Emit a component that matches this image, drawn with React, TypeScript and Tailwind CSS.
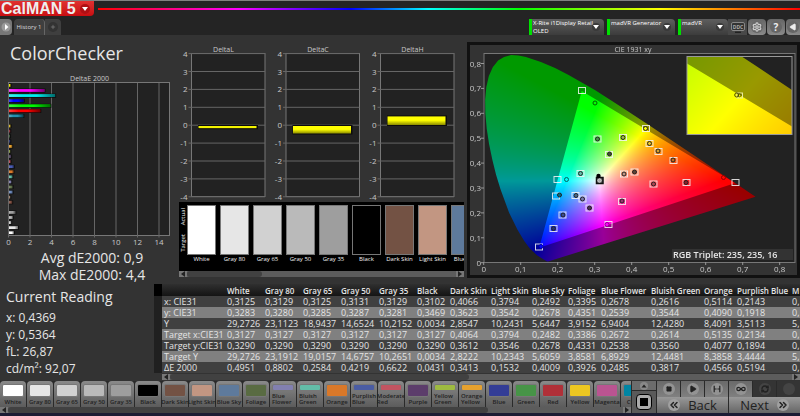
import { useEffect, useRef } from 'react';
import {
    ChevronsLeft, ChevronsRight, Infinity as InfinityIcon,
    Play, Plus, RefreshCw, Settings, Square,
} from 'lucide-react';

type Point = [number, number];

type Patch = {
    name: string;
    color: string;
    twoLines?: boolean;
};

const patches: Patch[] = [
    { name: 'White', color: '#ffffff' },
    { name: 'Gray 80', color: '#e6e6e6' },
    { name: 'Gray 65', color: '#d1d1d1' },
    { name: 'Gray 50', color: '#bababa' },
    { name: 'Gray 35', color: '#9e9e9e' },
    { name: 'Black', color: '#000000' },
    { name: 'Dark Skin', color: '#735244' },
    { name: 'Light Skin', color: '#c29682' },
    { name: 'Blue Sky', color: '#5e7a9c' },
    { name: 'Foliage', color: '#596b42' },
    { name: 'Blue Flower', color: '#8280b0', twoLines: true },
    { name: 'Bluish Green', color: '#63bda8', twoLines: true },
    { name: 'Orange', color: '#d97829' },
    { name: 'Purplish Blue', color: '#4a5ca3', twoLines: true },
    { name: 'Moderate Red', color: '#c25461', twoLines: true },
    { name: 'Purple', color: '#5c3d6b' },
    { name: 'Yellow Green', color: '#9eba40', twoLines: true },
    { name: 'Orange Yellow', color: '#e6a12e', twoLines: true },
    { name: 'Blue', color: '#333d96' },
    { name: 'Green', color: '#479447' },
    { name: 'Red', color: '#b03038' },
    { name: 'Yellow', color: '#edc721' },
    { name: 'Magenta', color: '#ba5491' },
    { name: 'Cyan', color: '#0085a3' },
];

const columns = [
    { name: 'White', width: 38 },
    { name: 'Gray 80', width: 38 },
    { name: 'Gray 65', width: 38 },
    { name: 'Gray 50', width: 38 },
    { name: 'Gray 35', width: 38 },
    { name: 'Black', width: 33 },
    { name: 'Dark Skin', width: 41 },
    { name: 'Light Skin', width: 41 },
    { name: 'Blue Sky', width: 36 },
    { name: 'Foliage', width: 33 },
    { name: 'Blue Flower', width: 50 },
    { name: 'Bluish Green', width: 53 },
    { name: 'Orange', width: 33 },
    { name: 'Purplish Blue', width: 55 },
    { name: 'M', width: 8 },
];

const rows = [
    { name: 'x: CIE31', values: '0,3125 0,3129 0,3125 0,3131 0,3129 0,3102 0,4066 0,3794 0,2492 0,3395 0,2678 0,2616 0,5114 0,2143 0,' },
    { name: 'y: CIE31', values: '0,3283 0,3280 0,3285 0,3287 0,3281 0,3469 0,3623 0,3542 0,2678 0,4351 0,2539 0,3544 0,4090 0,1918 0,' },
    { name: 'Y', values: '29,2726 23,1123 18,9437 14,6524 10,2152 0,0034 2,8547 10,2431 5,6447 3,9152 6,9404 12,4280 8,4091 3,5113 5,' },
    { name: 'Target x:CIE31', values: '0,3127 0,3127 0,3127 0,3127 0,3127 0,3127 0,4064 0,3794 0,2482 0,3386 0,2672 0,2614 0,5135 0,2134 0,' },
    { name: 'Target y:CIE31', values: '0,3290 0,3290 0,3290 0,3290 0,3290 0,3290 0,3612 0,3546 0,2678 0,4331 0,2538 0,3560 0,4077 0,1894 0,' },
    { name: 'Target Y', values: '29,2726 23,1912 19,0157 14,6757 10,2651 0,0034 2,8222 10,2343 5,6059 3,8581 6,8929 12,4481 8,3858 3,4444 5,' },
    { name: 'ΔE 2000', values: '0,4951 0,8802 0,2584 0,4219 0,6622 0,0431 0,3413 0,1532 0,4009 0,3926 0,2485 0,3817 0,4566 0,5194 0,' },
];

// dE2000 per patch, top to bottom
const errors: { value: number; color: string }[] = [
    { value: 0.15, color: '#e8e800' },
    { value: 3.35, color: '#ff00ff' },
    { value: 4.35, color: '#00f0f0' },
    { value: 1.4, color: '#0000ff' },
    { value: 3.9, color: '#00f800' },
    { value: 2.95, color: '#ff0000' },
    { value: 1.35, color: '#2390ae' },
    { value: 0, color: '#ba5491' },
    { value: 0.15, color: '#d8b830' },
    { value: 0.12, color: '#903840' },
    { value: 0.1, color: '#3f6040' },
    { value: 0.12, color: '#333d76' },
    { value: 0.3, color: '#e6a12e' },
    { value: 0.12, color: '#8ea050' },
    { value: 0.2, color: '#5c4d6b' },
    { value: 0.15, color: '#c25461' },
    { value: 0.45, color: '#4a5cb3' },
    { value: 0.42, color: '#d97829' },
    { value: 0.32, color: '#63bda8' },
    { value: 0.22, color: '#8280b0' },
    { value: 0.34, color: '#697b52' },
    { value: 0.34, color: '#6e8abc' },
    { value: 0.12, color: '#a28672' },
    { value: 0.3, color: '#835244' },
    { value: 0, color: '#000000' },
    { value: 0.6, color: '#9e9e9e' },
    { value: 0.35, color: '#bababa' },
    { value: 0.2, color: '#d1d1d1' },
    { value: 0.85, color: '#e6e6e6' },
    { value: 0.45, color: '#ffffff' },
];

const deltas = [
    { name: 'DeltaL', left: 191.5, value: -0.12 },
    { name: 'DeltaC', left: 286, value: -0.42 },
    { name: 'DeltaH', left: 380.5, value: 0.48 },
];

// CIE 1931 spectral locus
const locus: Point[] = [
    [0.1741, 0.005], [0.1714, 0.0051], [0.1644, 0.0109], [0.1566, 0.0177], [0.144, 0.0297],
    [0.1241, 0.0578], [0.1096, 0.0868], [0.0913, 0.1327], [0.0687, 0.2007], [0.0454, 0.295],
    [0.0334, 0.353], [0.0235, 0.4127], [0.0145, 0.477], [0.0082, 0.5384], [0.0045, 0.599],
    [0.0039, 0.6548], [0.007, 0.705], [0.0139, 0.7502], [0.0245, 0.785], [0.0389, 0.812],
    [0.055, 0.8265], [0.0743, 0.8338], [0.094, 0.832], [0.1142, 0.8262], [0.1547, 0.8059],
    [0.1929, 0.7816], [0.2296, 0.7543], [0.3016, 0.6923], [0.3731, 0.6245], [0.4441, 0.5547],
    [0.5125, 0.4866], [0.5752, 0.4242], [0.627, 0.3725], [0.6915, 0.3083], [0.7347, 0.2653],
];
const gamut: Point[] = [[0.68, 0.32], [0.265, 0.69], [0.15, 0.06]];

type Marker = { square?: Point; circle?: Point; fill?: string; stroke?: string };

const markers: Marker[] = [
    { square: [582, 90.5] },
    { circle: [595, 103], stroke: '#006000' },
    { square: [597.5, 139], circle: [597.5, 139], fill: '#479447' },
    { square: [623, 137.5], circle: [623, 137.5], fill: '#9eba40' },
    { square: [609, 154.5], circle: [609.5, 154], fill: '#435230' },
    { square: [580.5, 173.5], circle: [580.5, 173.5], fill: '#63bda8' },
    { square: [557.5, 179.5] },
    { circle: [566.5, 179.5], stroke: '#006060' },
    { square: [556, 196], circle: [559.5, 195], fill: '#006d85' },
    { square: [575.5, 195.5], circle: [576, 195.5], fill: '#4a6a8a' },
    { square: [582.5, 199], circle: [582.5, 199], fill: '#7a78b0' },
    { square: [589.5, 208], circle: [589.5, 208], fill: '#4c2d5b' },
    { square: [562.5, 215], circle: [563, 215], fill: '#3a4c93' },
    { square: [553.5, 228.5], circle: [553.5, 228.5], fill: '#232d76' },
    { square: [539, 247], circle: [541, 246.5], fill: '#0000ff', stroke: '#0000a0' },
    { square: [608.5, 224.5], circle: [607, 224.5], fill: '#ff00ff', stroke: '#900090' },
    { square: [622, 201.5], circle: [622, 201], fill: '#9a3471' },
    { square: [624, 174], circle: [624, 174], fill: '#c29682' },
    { square: [634.5, 172], circle: [634.5, 172], fill: '#634234' },
    { square: [646, 128.5], circle: [645.5, 128.5], fill: '#ffff00' },
    { square: [649.5, 143.5], circle: [649.5, 143.5], fill: '#edc721' },
    { square: [658.5, 151.5], circle: [658, 151], fill: '#d6a12e' },
    { square: [673.5, 160.5], circle: [673, 160], fill: '#c96819' },
    { square: [653.5, 184], circle: [653.5, 184], fill: '#b24451' },
    { square: [686.5, 182.5], circle: [686, 182.5], fill: '#902028' },
    { square: [735.5, 182.5] },
    { circle: [723.5, 177.5], stroke: '#900000' },
];

// plot coordinates of the chart, in the units of its view box
const VIEW = { x: 470, y: 45, width: 327, height: 230 };
const project = ([x, y]: Point): Point => [483.7 + x * 370, 262.7 - y * 249];

function chromaticityColor(x: number, y: number) {
    const X = x / y;
    const Z = (1 - x - y) / y;
    const rgb = [
        3.2406 * X - 1.5372 - 0.4986 * Z,
        -0.9689 * X + 1.8758 + 0.0415 * Z,
        0.0557 * X - 0.204 + 1.057 * Z,
    ].map((c) => Math.max(c, 0));
    const max = Math.max(...rgb);
    return rgb.map((c) => 255 * Math.pow(c / max, 0.8));
}

function tracePath(ctx: CanvasRenderingContext2D, points: Point[], toCanvas: (p: Point) => Point) {
    points.forEach((p, i) => {
        const [px, py] = toCanvas(p);
        if (i === 0) ctx.moveTo(px, py);
        else ctx.lineTo(px, py);
    });
    ctx.closePath();
}

function renderDiagram(width: number, height: number, center: Point, zoom: number) {
    const canvas = document.createElement('canvas');
    canvas.width = width;
    canvas.height = height;
    const ctx = canvas.getContext('2d')!;
    const image = ctx.createImageData(width, height);
    const [cx, cy] = project(center);
    for (let j = 0; j < height; j++) {
        for (let i = 0; i < width; i++) {
            const px = cx + (i + 0.5 - width / 2) / zoom;
            const py = cy + (j + 0.5 - height / 2) / zoom;
            const [r, g, b] = chromaticityColor((px - 483.7) / 370, Math.max((262.7 - py) / 249, 0.002));
            image.data.set([r, g, b, 255], (j * width + i) * 4);
        }
    }
    ctx.putImageData(image, 0, 0);

    const toCanvas = (p: Point): Point => {
        const [px, py] = project(p);
        return [(px - cx) * zoom + width / 2, (py - cy) * zoom + height / 2];
    };
    // dim everything outside the target gamut
    ctx.beginPath();
    ctx.rect(0, 0, width, height);
    tracePath(ctx, gamut, toCanvas);
    ctx.fillStyle = 'rgba(0,0,0,0.4)';
    ctx.fill('evenodd');
    ctx.globalCompositeOperation = 'destination-in';
    ctx.beginPath();
    tracePath(ctx, locus, toCanvas);
    ctx.fillStyle = '#000';
    ctx.fill();
    return canvas;
}

const CieChart = () => {
    const ref = useRef<HTMLCanvasElement>(null);

    useEffect(() => {
        const ctx = ref.current!.getContext('2d')!;
        ctx.fillStyle = '#222';
        ctx.fillRect(14, 9, 311, 209);
        const center: Point = [(633.5 - 483.7) / 370, (262.7 - 160) / 249];
        ctx.drawImage(renderDiagram(327, 230, center, 1), 0, 0);
        ctx.fillRect(217, 11, 105, 79);
        ctx.drawImage(renderDiagram(105, 79, [0.4369, 0.5364], 6.4), 217, 11);
    }, []);

    return (
        <div className="relative">
            <canvas ref={ref} width={VIEW.width} height={VIEW.height} className="block w-full" />
            <svg viewBox="470 45 327 230" className="absolute inset-0 size-full" role="img" aria-label="CIE 1931 xy">
                <rect x="484" y="53.5" width="311" height="209" fill="none" stroke="#777" />
                <rect x="687" y="56.5" width="105" height="78" fill="none" stroke="#999" />
                <g fill="#c8c8c8" fontSize="8">
                    <text x="633" y="52" textAnchor="middle" fontSize="7">CIE 1931 xy</text>
                    {[0, 1, 2, 3, 4, 5, 6, 7, 8].map((n) => {
                        const label = n === 0 ? '0' : `0,${n}`;
                        const [px] = project([n / 10, 0]);
                        const [, py] = project([0, n / 10]);
                        return (
                            <g key={n}>
                                <path d={`M${px} 262v3M481 ${py}h3`} stroke="#999" />
                                <text x={px} y="272" textAnchor="middle">{label}</text>
                                <text x="481" y={py + 3} textAnchor="end">{label}</text>
                            </g>
                        );
                    })}
                </g>
                {markers.map(({ square, circle, fill = 'none', stroke = '#222' }, i) => (
                    <g key={i}>
                        {square && <rect x={square[0] - 3.5} y={square[1] - 3} width="7" height="6" fill="none" stroke="#f4f4f4" strokeOpacity="0.85" />}
                        {circle && <circle cx={circle[0]} cy={circle[1]} r="2" fill={fill} stroke={stroke} />}
                    </g>
                ))}
                <rect x="596.5" y="177.5" width="6.5" height="6" fill="#555" stroke="#111" strokeWidth="1.5" />
                <circle cx="599.5" cy="180.5" r="1.8" fill="#aaa" stroke="#ddd" strokeWidth="0.8" />
                <circle cx="598.5" cy="176" r="2.2" fill="#000" />
                <rect x="737" y="93" width="5.5" height="5" fill="none" stroke="#e8e8a0" />
                <circle cx="736.7" cy="95" r="2" fill="none" stroke="#4a4a00" />
                <circle cx="739.5" cy="95.2" r="1.6" fill="none" stroke="#4a4a00" strokeWidth="0.8" />
                <rect x="672" y="249" width="121" height="11" fill="#333" />
                <text x="673" y="258" fill="#e6e6e6" fontSize="9" fontWeight="600">RGB Triplet: 235, 235, 16</text>
            </svg>
        </div>
    );
};

const DeltaEChart = () => (
    <svg viewBox="0 72 176 177" className="block w-full" role="img" aria-label="DeltaE 2000">
        <defs>
            <linearGradient id="shade" x1="0" x2="1" y1="0" y2="0">
                <stop offset="0" stopColor="#fff" stopOpacity="0.25" />
                <stop offset="0.3" stopColor="#fff" stopOpacity="0" />
                <stop offset="0.6" stopColor="#000" stopOpacity="0" />
                <stop offset="1" stopColor="#000" stopOpacity="0.55" />
            </linearGradient>
        </defs>
        <rect x="8.5" y="82.5" width="161" height="153" fill="#222" stroke="#777" />
        <g fill="#c8c8c8" fontSize="7">
            <text x="89.5" y="81" textAnchor="middle">DeltaE 2000</text>
            {[0, 2, 4, 6, 8, 10, 12, 14].map((n) => (
                <g key={n}>
                    <path d={`M${8.5 + n * 10.75} 83v154.5`} stroke="#666" />
                    <text x={8.5 + n * 10.75} y="245" textAnchor="middle" fontSize="8">{n}</text>
                </g>
            ))}
        </g>
        {errors.map(({ value, color }, i) => value > 0 && (
            <g key={i}>
                <rect x="9" y={83.5 + i * 5.08} width={value * 10.6 + 1} height="4" fill="#0c0c0c" />
                <rect x="9" y={84 + i * 5.08} width={value * 10.6} height="2.8" fill={color} />
                <rect x="9" y={84 + i * 5.08} width={value * 10.6} height="2.8" fill="url(#shade)" />
            </g>
        ))}
    </svg>
);

const DeltaCharts = () => (
    <svg viewBox="176 42 291 160" className="block w-full" role="img" aria-label="DeltaL, DeltaC, DeltaH">
        <defs>
            <linearGradient id="bar" x1="0" x2="0" y1="0" y2="1">
                <stop offset="0.45" stopColor="#ffff00" />
                <stop offset="1" stopColor="#8a8a00" />
            </linearGradient>
        </defs>
        {deltas.map(({ name, left, value }) => {
            const top = value > 0 ? 125 - value * 17.9 : 126;
            const height = Math.abs(value) * 17.9;
            return (
                <g key={name}>
                    <text x={left + 32} y="52" textAnchor="middle" fontSize="7" fill="#c8c8c8">{name}</text>
                    <rect x={left} y="53.5" width="73.5" height="143" fill="#222" stroke="#777" />
                    {[4, 3, 2, 1, 0, -1, -2, -3, -4].map((n) => (
                        <g key={n}>
                            <path d={`M${left - 3} ${125.2 - n * 17.9}H${left + 73.5}`} stroke="#666" />
                            <text x={left - 4} y={128.2 - n * 17.9} textAnchor="end" fontSize="8" fill="#c8c8c8">{n}</text>
                        </g>
                    ))}
                    <rect x={left + 6.5} y={top - 1} width="60" height={height + 2} fill="#0c0c0c" />
                    <rect x={left + 7} y={top} width="58" height={Math.max(height, 1.5)} fill={height < 4 ? '#f4f400' : 'url(#bar)'} />
                </g>
            );
        })}
    </svg>
);

const ScrollArrow = ({ label, d }: { label: string; d: string }) => (
    <button type="button" aria-label={label} className="flex w-2 shrink-0 items-center justify-center bg-[#777]">
        <svg viewBox="0 0 6 6" className="size-1.5"><path d={d} fill="#222" /></svg>
    </button>
);

const ScrollBar = ({ thumb }: { thumb: string }) => (
    <div className="flex h-1.5 bg-[#5c5c5c]">
        <ScrollArrow label="Scroll left" d="M5 0v6L1 3z" />
        <div className="flex-1">
            <div className={`h-full rounded-full bg-[#414141] ${thumb}`} />
        </div>
        <ScrollArrow label="Scroll right" d="M1 0v6l4-3z" />
    </div>
);

const DeviceSelect = ({ label, name, detail, width }: { label: string; name: string; detail?: string; width: string }) => (
    <div className={`relative flex h-4 rounded-t-sm bg-linear-to-b from-[#5e5e5e] to-[#3c3c3c] text-[6px] leading-[8px] text-white ${width}`}>
        <span className="w-[3px] shrink-0 bg-[#00e000]" />
        <div className="min-w-0 flex-1 pl-px">
            <select aria-label={label} className="block h-2 w-full appearance-none bg-transparent">
                <option>{name}</option>
            </select>
            {detail && <span className="block">{detail}</span>}
        </div>
        <span className="pointer-events-none absolute top-1 right-1 flex size-2 items-center justify-center rounded-full bg-[#3a3a3a]">
            <svg viewBox="0 0 6 4" className="w-1.5"><path d="M0 0h6L3 4z" fill="#fff" /></svg>
        </span>
    </div>
);

const Header = () => (
    <header className="border-t border-[#808080] bg-[#242424]">
        <div className="flex h-[15px] items-center gap-1">
            <h1 className="flex h-full w-[94px] items-center justify-between rounded-br-sm bg-linear-to-b from-[#e03030] to-[#c80c10] pr-1 pl-px font-['Liberation_Sans',sans-serif] text-[16px] leading-none font-bold text-[#eee]">
                <span>CalMAN 5</span>
                <button type="button" aria-label="Menu" className="flex size-2.5 items-center justify-center rounded-full bg-[#b01014]">
                    <svg viewBox="0 0 6 4" className="w-1.5"><path d="M0 0h6L3 4z" fill="#fff" /></svg>
                </button>
            </h1>
            <div className="h-0.5 flex-1 bg-[linear-gradient(90deg,#f00,#f0f_20%,#00f_36%,#0ff_47%,#0f0_60%,#ff0_80%,#f00)]" />
        </div>
        <div className="flex h-[19px] items-center justify-between pt-[3px]">
            <div className="flex h-4">
                <button type="button" aria-label="Open panel" className="mr-0.5 flex w-3 items-center justify-center rounded-r-sm bg-[#777]">
                    <svg viewBox="0 0 10 10" className="size-2.5"><circle cx="5" cy="5" r="4.5" fill="#999" /><path d="M4 2v6l3.5-3z" fill="#fff" /></svg>
                </button>
                <button type="button" className="w-[31px] rounded-t-sm border-r border-[#666] bg-[#3f3f3f] text-[6px] whitespace-nowrap text-[#ddd]">History 1</button>
                <button type="button" aria-label="Add history" className="flex w-4 items-center justify-center rounded-tr-sm bg-[#3f3f3f]">
                    <Plus className="size-2.5 rounded-full bg-[#333] p-0.5 text-[#999]" />
                </button>
            </div>
            <div className="flex h-4 text-[#eee]">
                <div className="flex gap-[3px]">
                    <DeviceSelect label="Meter" name="X-Rite i1Display Retail" detail="OLED" width="w-[75px]" />
                    <DeviceSelect label="Source" name="madVR Generator" width="w-[68px]" />
                    <DeviceSelect label="Display" name="madVR" width="w-[50px]" />
                </div>
                <button type="button" aria-label="DDC" className="mr-px flex w-[19px] items-center justify-center bg-[#484848]">
                    <svg viewBox="0 0 14 11" className="w-3.5"><rect x="0.5" y="0.5" width="13" height="8" rx="1.5" fill="#333" stroke="#888" /><path d="M4 10.3h6" stroke="#222" strokeWidth="1.5" /><text x="7" y="6.5" fontSize="5" fontWeight="700" textAnchor="middle" fill="#aaa">DDC</text></svg>
                </button>
                <button type="button" aria-label="Settings" className="mr-px flex w-[18px] items-center justify-center rounded-sm bg-linear-to-b from-[#666] to-[#8a8a8a]">
                    <span className="flex size-3 items-center justify-center rounded-full bg-[#666]"><Settings className="size-2.5 text-[#ccc]" strokeWidth={3} /></span>
                </button>
                <button type="button" aria-label="Help" className="mr-px flex w-[18px] items-center justify-center rounded-sm bg-linear-to-b from-[#666] to-[#8a8a8a]">
                    <span className="flex size-3 items-center justify-center rounded-full bg-[#666] text-[10px] leading-none font-bold">?</span>
                </button>
                <button type="button" aria-label="Collapse" className="flex w-[14px] items-center justify-center rounded-l-sm bg-linear-to-b from-[#666] to-[#8a8a8a]">
                    <span className="flex size-3 items-center justify-center rounded-full bg-[#666]"><Play className="size-2 rotate-180 fill-current" /></span>
                </button>
            </div>
        </div>
    </header>
);

const SwatchStrip = () => (
    <div className="mx-[3px]">
        <div className="flex h-[69px] overflow-hidden bg-black pt-[3px] text-[6px] leading-[8px] text-[#f4f4f4]">
            <div className="flex h-[50px] w-2 shrink-0 flex-col items-center justify-between py-[3px]">
                <span className="rotate-180 [writing-mode:vertical-rl]">Actual</span>
                <span className="rotate-180 [writing-mode:vertical-rl]">Target</span>
            </div>
            <ul className="flex min-w-0 gap-1">
                {patches.slice(0, 9).map((patch) => (
                    <li key={patch.name} className="flex w-[29px] shrink-0 flex-col items-center whitespace-nowrap">
                        <span className="h-[50px] w-full border border-[#777]" style={{ backgroundColor: patch.color }} />
                        <span>{patch.name}</span>
                    </li>
                ))}
            </ul>
        </div>
        <ScrollBar thumb="w-[28%]" />
    </div>
);

const ReadingsTable = () => (
    <div className="min-w-0 flex-1">
        <div className="overflow-hidden">
            <table className="w-full table-fixed border-separate border-spacing-0 text-left text-[9px] leading-[11px] whitespace-nowrap text-[#e4e4e4]">
                <colgroup>
                    <col style={{ width: 73 }} />
                    {columns.map((column) => <col key={column.name} style={{ width: column.width }} />)}
                </colgroup>
                <thead>
                    <tr className="h-3 bg-linear-to-b from-[#303030] to-[#141414] text-[8px]">
                        <td className="border-l-8 border-black p-0" />
                        {columns.map((column) => <th key={column.name} scope="col" className="p-0 font-semibold">{column.name}</th>)}
                    </tr>
                </thead>
                <tbody>
                    {rows.map((row) => (
                        <tr key={row.name} className="h-[11px] bg-[#404040] even:bg-[#808080]">
                            <th scope="row" className="border-l-8 border-[#202020] p-0 pl-0.5 font-normal">{row.name}</th>
                            {row.values.split(' ').map((value, i) => <td key={i} className="p-0">{value}</td>)}
                        </tr>
                    ))}
                </tbody>
            </table>
        </div>
        <div className="mt-px ml-2"><ScrollBar thumb="w-[48%]" /></div>
    </div>
);

const toolButtons = [
    { label: 'Stop', icon: <Square className="size-1.5 fill-current" />, dark: false },
    { label: 'Read', icon: <Play className="size-2 fill-current" />, dark: false },
    { label: 'Read series', icon: <svg viewBox="0 0 10 10" className="size-2"><path d="M1.5 1v8M8.5 1v8M2 5h2.5M5.5 5h2.5" stroke="currentColor" strokeWidth="1.5" /></svg>, dark: false },
    { label: 'Read continuously', icon: <InfinityIcon className="size-2.5" strokeWidth={3} />, dark: false },
    { label: 'Refresh', icon: <RefreshCw className="size-2" strokeWidth={4} />, dark: true },
    { label: 'Record', icon: null, dark: true },
];

const Footer = () => (
    <footer className="flex h-[35px] border-b-[3px] border-[#1c1c34] bg-[#2a2a2a]">
        <div className="min-w-0 flex-1">
            <div className="flex h-[26px] gap-px overflow-hidden">
                {patches.map((patch) => (
                    <button key={patch.name} type="button" className="flex h-full w-[26px] shrink-0 flex-col items-center justify-between rounded-t-sm bg-linear-to-b from-[#8a8a8a] to-[#5c5c5c] px-0.5 pt-[3px] text-[6px] leading-[6px] font-semibold text-[#222]">
                        <span className={`w-full shrink-0 rounded-xs border border-[#777] ${patch.twoLines ? 'h-[7px]' : 'h-[13px]'}`} style={{ backgroundColor: patch.color }} />
                        <span className={patch.twoLines ? 'pb-0.5 text-left' : 'pb-0.5 whitespace-nowrap'}>{patch.name}</span>
                    </button>
                ))}
            </div>
            <ScrollBar thumb="w-[78%]" />
        </div>
        <div className="ml-px flex w-6 flex-col">
            <button type="button" aria-label="Expand" className="flex h-[9px] items-center justify-center bg-[#6c6c6c]">
                <svg viewBox="0 0 8 8" className="size-2"><circle cx="4" cy="4" r="4" fill="#888" /><path d="M1.5 5.5h5L4 2.5z" fill="#222" /></svg>
            </button>
            <button type="button" aria-label="Current pattern" className="mt-px flex flex-1 items-center justify-center bg-[#5a5a5a]">
                <span className="flex size-4 items-center justify-center rounded-sm border border-black bg-[#aaa]"><span className="size-2 bg-black" /></span>
            </button>
        </div>
        <div className="ml-px w-[143px]">
            <div className="grid h-4 grid-cols-6 gap-px">
                {toolButtons.map((button) => (
                    <button key={button.label} type="button" aria-label={button.label} className={`flex items-center justify-center text-[#222] ${button.dark ? 'bg-[#343434]' : 'bg-linear-to-b from-[#6a6a6a] to-[#808080]'}`}>
                        <span className={`flex size-3 items-center justify-center rounded-full ${button.dark ? 'bg-[#444]' : 'bg-[#939393]'}`}>{button.icon}</span>
                    </button>
                ))}
            </div>
            <div className="grid h-4 grid-cols-2 gap-px text-[13px] leading-none text-[#222]">
                <button type="button" className="flex items-center justify-center gap-2 bg-linear-to-b from-[#999] to-[#666]"><ChevronsLeft className="size-3 rounded-full bg-[#a0a0a0]" strokeWidth={3} />Back</button>
                <button type="button" className="flex items-center justify-center gap-2 bg-linear-to-b from-[#999] to-[#666]">Next<ChevronsRight className="size-3 rounded-full bg-[#a0a0a0]" strokeWidth={3} /></button>
            </div>
        </div>
    </footer>
);

export default function App() {
    return (
        <div className="overflow-hidden bg-[#333] font-['Open_Sans','Noto_Sans',sans-serif] text-[#e6e6e6]">
            <Header />
            <main>
                <div className="grid min-h-[249px] grid-cols-[176fr_291fr_333fr] items-start">
                    <section className="min-w-0">
                        <h2 className="h-[37px] pt-1.5 pl-2.5 text-[18px] leading-6">ColorChecker</h2>
                        <DeltaEChart />
                        <div className="pl-2 text-center text-[14px] leading-[17px]">
                            <p>Avg dE2000: 0,9</p>
                            <p>Max dE2000: 4,4</p>
                        </div>
                    </section>
                    <section className="min-w-0 pt-[7px]">
                        <DeltaCharts />
                        <SwatchStrip />
                    </section>
                    <section className="mt-[7px] min-w-0 border-[3px] border-[#111]">
                        <CieChart />
                    </section>
                </div>
                <div className="flex h-[97px]">
                    <section className="w-[154px] pt-1 pl-1.5 text-[12px] leading-[17px]">
                        <h2 className="mb-1 text-[14px]">Current Reading</h2>
                        <p>x: 0,4369</p>
                        <p>y: 0,5364</p>
                        <p>fL: 26,87</p>
                        <p>cd/m²: 92,07</p>
                    </section>
                    <ReadingsTable />
                </div>
            </main>
            <Footer />
        </div>
    );
}
